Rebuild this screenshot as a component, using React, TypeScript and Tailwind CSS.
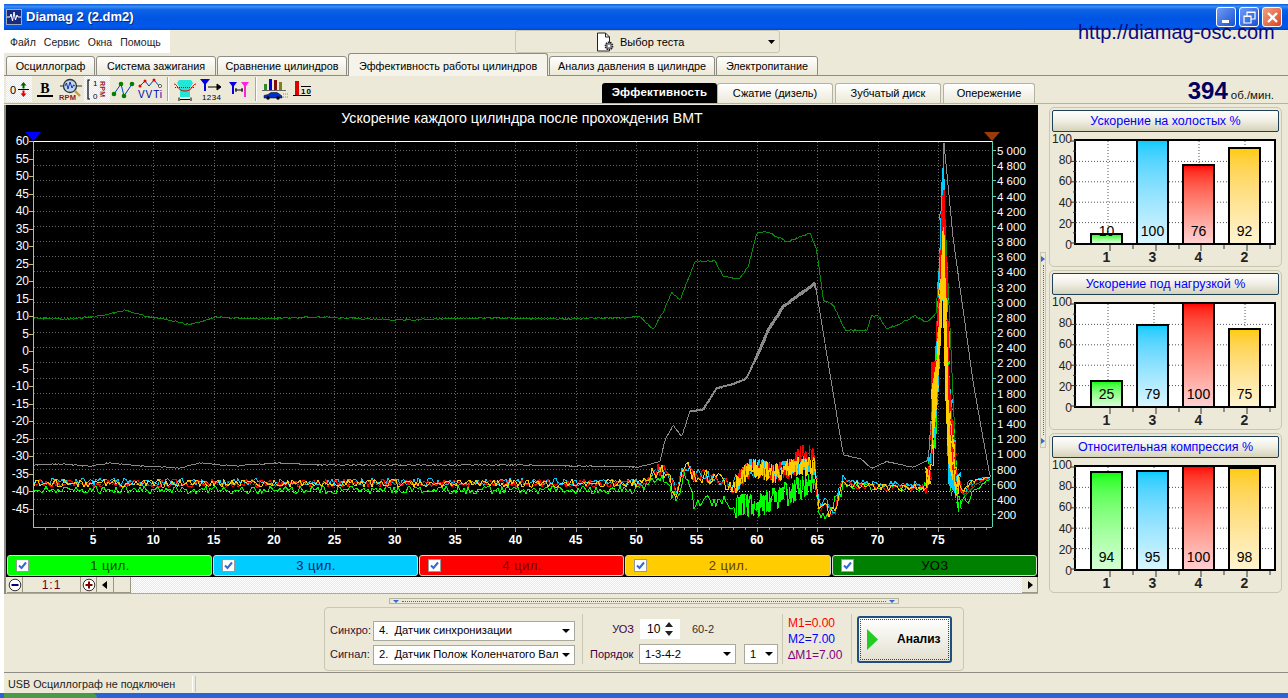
import React from "react";

const rng = (seed: number) => () => {
  seed |= 0; seed = (seed + 0x6d2b79f5) | 0;
  let t = Math.imul(seed ^ (seed >>> 15), 1 | seed);
  t = (t + Math.imul(t ^ (t >>> 7), 61 | t)) ^ t;
  return ((t ^ (t >>> 14)) >>> 0) / 4294967296;
};
type P = [number, number];
const z = (pts: P[]): P[] => pts.map(([x, y]) => [640 + x / 3, 130 + y / 3]);
const interp = (pts: P[], x: number) => {
  if (x <= pts[0][0]) return pts[0][1];
  for (let i = 1; i < pts.length; i++) {
    if (x <= pts[i][0]) {
      const [a, b] = pts[i - 1]; const [c, d] = pts[i];
      return b + ((d - b) * (x - a)) / (c - a);
    }
  }
  return pts[pts.length - 1][1];
};
const toStr = (pts: P[]) => pts.map(([x, y]) => `${x.toFixed(1)},${y.toFixed(1)}`).join(" ");
const resample = (pts: P[], seed: number, amp: number, from: number, to: number, step = 1.5) => {
  const r = rng(seed);
  const out: P[] = [];
  for (let x = from; x <= to; x += step) {
    const a = x > 925 && x < 960 ? 0.2 : amp;
    out.push([x, interp(pts, x) + (r() - 0.5) * 2 * a]);
  }
  return out;
};

const grayPts: P[] = [[33, 465], [60, 464], [90, 466], [110, 463], [130, 465], [160, 467], [180, 468], [200, 463], [235, 466], [275, 463], [320, 465], [400, 465], [520, 465], [640, 467],
  ...z([[0, 1010], [60, 995], [75, 930], [100, 885], [125, 920], [150, 845], [190, 838], [230, 775], [270, 765], [320, 745], [350, 680], [385, 600], [430, 530], [470, 500], [525, 460], [560, 670], [610, 975], [660, 985], [695, 1015], [740, 995], [820, 1012], [865, 990], [890, 620], [912, 40], [940, 330], [1000, 760], [1050, 1040]])];
const uozPts: P[] = [[33, 318], [70, 319], [100, 316], [125, 310], [150, 317], [170, 320], [190, 325], [215, 317], [260, 319], [320, 317], [400, 320], [480, 318], [560, 319], [640, 317],
  ...z([[40, 598], [70, 545], [95, 488], [120, 510], [165, 395], [225, 392], [250, 440], [300, 445], [325, 410], [350, 310], [380, 305], [440, 335], [510, 310], [530, 360], [550, 510], [580, 525], [615, 600], [680, 602], [695, 557], [715, 558], [740, 598], [780, 580], [825, 557], [860, 578], [888, 550], [905, 300], [912, 200], [925, 480], [950, 1040], [975, 1100], [1010, 1060], [1050, 1045]])];

const colorCenter = z([[0, 1060], [65, 1015], [110, 1085], [135, 1000], [160, 1040], [220, 1040], [280, 1075], [330, 1010], [400, 1030], [480, 1010], [525, 1010], [535, 1120], [580, 1150], [610, 1060], [700, 1070], [855, 1075], [870, 1000], [890, 720], [908, 110], [925, 720], [950, 1040], [970, 1085], [1010, 1050], [1050, 1045]]);
const greenCenter = z([[0, 1080], [65, 1030], [110, 1115], [135, 1030], [165, 1130], [220, 1110], [290, 1130], [340, 1130], [400, 1110], [470, 1080], [520, 1050], [535, 1130], [555, 1170], [610, 1070], [855, 1075], [880, 950], [908, 180], [930, 800], [955, 1125], [1000, 1090], [1050, 1045]]);

const series = (seed: number, center: P[], extra: (x: number) => number, greenAmp = false) => {
  const r = rng(seed);
  const pts: P[] = [];
  let x = 34;
  while (x < 992) {
    let amp = 4;
    if (x > 650 && x < 815) amp = greenAmp ? (x > 735 ? 13 : 7) : x > 735 ? 10 : 7;
    else if (x >= 815 && x < 845) amp = 7;
    else if (x >= 845 && x < 925) amp = 3.5;
    else if (x >= 925 && x < 960) amp = 10;
    else if (x >= 960) amp = x > 975 ? 1.5 : 6;
    const c = interp(center, x) + extra(x);
    const dx = x >= 925 && x < 960 ? (r() - 0.5) * 4 : 0;
    pts.push([x + dx, c + (r() - 0.5) * 2 * amp]);
    x += x > 735 && x < 815 ? 0.5 : x > 925 && x < 960 ? 0.4 : 2;
  }
  return toStr(pts);
};
const peak = (k: number) => (x: number) => (x > 925 && x < 962 ? k * Math.max(0, 1 - Math.abs(x - 943) / 16) : 0);
const Gs = {
  green: series(11, greenCenter, peak(0), true),
  cyan: series(22, colorCenter, (x) => (x > 815 && x < 925 ? -3 : -1) + peak(10)(x)),
  red: series(33, colorCenter, (x) => (x > 795 && x < 816 ? -13 : 0) + peak(30)(x)),
  yellow: series(44, colorCenter, (x) => peak(60)(x)),
};
const cyanPoly = toStr(z([[906, 115], [913, 115], [925, 720], [945, 1090], [925, 1060], [915, 720], [908, 500], [895, 800], [885, 900], [880, 980], [890, 700]]));
const greenPoly = toStr(z([[905, 135], [913, 135], [922, 740], [935, 1100], [925, 1050], [908, 500], [895, 750], [888, 960], [880, 950], [890, 700]]));
const redPoly = toStr(z([[908, 180], [914, 180], [926, 730], [952, 1040], [935, 1030], [918, 780], [908, 400], [895, 720], [880, 900], [872, 820], [872, 700], [890, 690]]));
const yellowPoly = toStr(z([[908, 290], [913, 290], [925, 800], [940, 1060], [925, 1000], [916, 800], [908, 500], [890, 830], [878, 950], [874, 780], [892, 680]]));

const rightLabels = ["5 000", "4 800", "4 600", "4 400", "4 200", "4 000", "3 800", "3 600", "3 400", "3 200", "3 000", "2 800", "2 600", "2 400", "2 200", "2 000", "1 800", "1 600", "1 400", "1 200", "1 000", "800", "600", "400", "200"];
const xU = (u: number) => 93 + (u - 5) * 12.07;
const leftY = (v: number) => 141 + (60 - v) * 3.5;

const grayA = toStr(resample(grayPts, 5, 0.5, 33, 690));
const grayB = toStr(resample(grayPts, 6, 0.3, 815, 991));
const grayC = toStr(resample(grayPts, 7, 0.5, 690, 816));
const grayD = toStr(resample(grayPts, 8, 0.6, 755, 816));
const uoz = toStr(resample(uozPts, 9, 0.8, 33, 991));

function Chart() {
  const leftVals: number[] = [];
  for (let v = 60; v >= -45; v -= 5) leftVals.push(v);
  const xVals: number[] = [];
  for (let u = 5; u <= 75; u += 5) xVals.push(u);
  const minor: number[] = [];
  for (let u = 1; u <= 79; u++) minor.push(u);
  return (
    <svg viewBox="6 105 1032 448" className="block h-[448px] w-[1032px] bg-black">
      <text x="522" y="123" fill="#fff" fontSize="14.2" textAnchor="middle" fontFamily="'Liberation Sans',sans-serif">Ускорение каждого цилиндра после прохождения ВМТ</text>
      {rightLabels.map((_, i) => {
        const y = Math.round(150 + i * 15.17) + 0.5;
        return <line key={i} x1="34" x2="991" y1={y} y2={y} stroke="#666" strokeDasharray="1 2" />;
      })}
      {xVals.map((u) => <line key={u} x1={Math.round(xU(u)) + 0.5} x2={Math.round(xU(u)) + 0.5} y1="142" y2="526" stroke="#666" strokeDasharray="1 2" />)}
      <line x1="34" x2="991" y1="491.5" y2="491.5" stroke="#8ff" strokeDasharray="1 2" />
      <g fill="none" shapeRendering="crispEdges">
        <polyline points={uoz} stroke="#0a8a0a" strokeWidth="1" />
        <polyline points={grayA} stroke="#8a8a8a" strokeWidth="1" />
        <polyline points={grayB} stroke="#8a8a8a" strokeWidth="1" />
        <polyline points={grayC} stroke="#8a8a8a" strokeWidth="2" />
        <polyline points={grayD} stroke="#8a8a8a" strokeWidth="3" />
        <polyline points={Gs.green} stroke="#00ff00" strokeWidth="1" />
        <polygon points={greenPoly} fill="#00ff00" />
        <polyline points={Gs.cyan} stroke="#00ccff" strokeWidth="1" />
        <polygon points={cyanPoly} fill="#00ccff" />
        <polyline points={Gs.red} stroke="#ff0000" strokeWidth="1" />
        <polygon points={redPoly} fill="#ff0000" />
        <polyline points={Gs.yellow} stroke="#ffcc00" strokeWidth="1" />
        <polygon points={yellowPoly} fill="#ffcc00" />
      </g>
      <line x1="33" x2="992" y1="141.5" y2="141.5" stroke="#fff" />
      <line x1="33.5" x2="33.5" y1="141" y2="527" stroke="#c8bc78" />
      <line x1="33" x2="992" y1="527.5" y2="527.5" stroke="#b0b0b0" />
      <line x1="992.5" x2="992.5" y1="141" y2="527" stroke="#5fd0b0" />
      <polygon points="25,132 41,132 33,141" fill="#0000ff" />
      <polygon points="984,132 1000,132 992,141" fill="#983c08" />
      {leftVals.map((v) => (
        <g key={v}>
          <line x1="29" x2="33" y1={Math.round(leftY(v)) + 0.5} y2={Math.round(leftY(v)) + 0.5} stroke="#c8bc78" />
          <text x="29" y={leftY(v) + 4} fill="#fff" fontSize="12" textAnchor="end" fontFamily="'Liberation Sans',sans-serif">{v}</text>
        </g>
      ))}
      {rightLabels.map((l, i) => {
        const y = Math.round(150 + i * 15.17) + 0.5;
        return (
          <g key={l}>
            <line x1="992" x2="996" y1={y} y2={y} stroke="#5fd0b0" />
            <text x="997" y={y + 4} fill="#fff" fontSize="11.5" fontFamily="'Liberation Sans',sans-serif">{l}</text>
          </g>
        );
      })}
      {minor.map((u) => <line key={u} x1={Math.round(xU(u)) + 0.5} x2={Math.round(xU(u)) + 0.5} y1="528" y2={u % 5 === 0 ? 532 : 530} stroke="#999" />)}
      {xVals.map((u) => <text key={u} x={xU(u)} y="544" fill="#fff" fontSize="12" fontWeight="700" textAnchor="middle" fontFamily="'Liberation Sans',sans-serif">{u}</text>)}
    </svg>
  );
}

const Tab = ({ label, w, active }: { label: string; w: string; active?: boolean }) => (
  <div className={`${w} ${active ? "h-[23px] -mt-px relative z-10 border-b-0 bg-[#f6f4ea] pt-0.5" : "h-[20px] mt-0.5 bg-gradient-to-b from-white to-[#ece9d8]"} flex shrink-0 items-center justify-center rounded-t-[3px] border border-[#8d8d85] text-[10.8px] text-black`}>
    {label}
  </div>
);

const SubTab = ({ label, w, active }: { label: string; w: string; active?: boolean }) => (
  <div className={`${w} ${active ? "bg-black font-bold text-white tracking-[0.2px] text-[11.5px]" : "border border-b-0 border-[#b5b2a0] bg-gradient-to-b from-white to-[#ece9d8] text-black text-[11px]"} flex h-[20px] shrink-0 items-center justify-center rounded-t-[3px]`}>
    {label}
  </div>
);

const IconBox = ({ pressed, w = "w-[26px]", children }: { pressed?: boolean; w?: string; children: React.ReactNode }) => (
  <div className={`${w} ${pressed ? "bg-[repeating-conic-gradient(#ece9d8_0_25%,#fff_0_50%)] bg-[length:2px_2px]" : ""} flex h-[26px] shrink-0 items-center justify-center`}>
    {children}
  </div>
);
const Sv = ({ children, w = 24, h = 24 }: { children: React.ReactNode; w?: number; h?: number }) => (
  <svg width={w} height={h} viewBox={`0 0 ${w} ${h}`} fontFamily="'Liberation Sans',sans-serif">{children}</svg>
);
const Sep = () => <div className="mx-[3px] h-[24px] w-[2px] shrink-0 border-l border-r border-l-[#aca899] border-r-white" />;

function Toolbar() {
  return (
    <div className="flex items-center">
      <IconBox pressed><Sv>
        <text x="3" y="17" fontSize="11" fill="#000">0</text>
        <line x1="11" x2="22" y1="12.5" y2="12.5" stroke="#000" />
        <path d="M16.5 5l3 3.5h-2v3h-2v-3h-2z" fill="#006000" />
        <path d="M16.5 20l3-3.5h-2v-3h-2v3h-2z" fill="#e00000" />
      </Sv></IconBox>
      <IconBox><Sv>
        <text x="12" y="16" fontSize="14" fontWeight="700" textAnchor="middle" fontFamily="'Liberation Serif',serif" fill="#000">B</text>
        <rect x="4" y="18" width="16" height="2" fill="#000" />
      </Sv></IconBox>
      <IconBox><Sv>
        <circle cx="11" cy="9" r="6.5" fill="#b9d8f0" stroke="#333" strokeWidth="1.3" />
        <path d="M6 9l1.5-3 1.5 6 2-7 2 6 1.5-3 1.5 1" fill="none" stroke="#0000a0" strokeWidth="0.8" />
        <line x1="1" x2="5" y1="9" y2="9" stroke="#333" /><line x1="17" x2="23" y1="9" y2="9" stroke="#333" />
        <line x1="16" x2="21" y1="14" y2="19" stroke="#c9a030" strokeWidth="2.4" />
        <text x="0" y="23" fontSize="7.5" fontWeight="700" fill="#8c1c1c" textLength="17">RPM</text>
      </Sv></IconBox>
      <IconBox pressed><Sv>
        <path d="M5 3H3v19h2" fill="none" stroke="#000" strokeWidth="1.2" />
        <text x="8" y="9" fontSize="8" fill="#000">1</text><text x="8" y="22" fontSize="8" fill="#000">0</text>
        <text x="0" y="0" fontSize="7" fontWeight="700" fill="#8c1c1c" transform="translate(15 4) rotate(90)" textLength="16">RPM</text>
      </Sv></IconBox>
      <IconBox><Sv>
        <polyline points="3,17 10,7 13,19 21,7" fill="none" stroke="#0040c0" />
        {[[3, 17], [10, 7], [13, 19], [21, 7]].map(([x, y]) => <circle key={x} cx={x} cy={y} r="2.3" fill="#008000" />)}
      </Sv></IconBox>
      <IconBox w="w-[28px]"><Sv w={26}>
        <polyline points="2,10 8,4 12,9 17,3 23,10" fill="none" stroke="#0040c0" />
        {[[3, 9], [8, 4], [17, 3]].map(([x, y]) => <circle key={x} cx={x} cy={y} r="1.5" fill="#e00000" />)}
        <circle cx="23" cy="9" r="1.6" fill="#fff" stroke="#000" strokeWidth="0.6" />
        <text x="1" y="21" fontSize="10" fill="#0000b0" textLength="24">VVTi</text>
      </Sv></IconBox>
      <Sep />
      <IconBox><Sv>
        <path d="M6 3h12l2 3-3 5v9H7v-9L4 6z" fill="#22e6d6" />
        <path d="M1 7c4 0 3 7 11 7s7-7 11-7" fill="none" stroke="#e00000" />
        <line x1="2" x2="22" y1="10.5" y2="10.5" stroke="#333" strokeDasharray="1 1" />
        <path d="M7 22.5h10M6 20.5v4M18 20.5v4" stroke="#000" fill="none" />
      </Sv></IconBox>
      <IconBox w="w-[28px]"><Sv w={26}>
        <path d="M1 2h10l-4 5v7H5V7z" fill="#0000e0" />
        <path d="M9 10h12m-3-3l4 3-4 3z" stroke="#000" fill="#000" />
        <text x="3" y="23" fontSize="8" fill="#000" textLength="19">1234</text>
      </Sv></IconBox>
      <IconBox><Sv>
        <path d="M2 5h8L7 9v8H5V9z" fill="#0000e0" />
        <path d="M14 5h8l-3 4v11h-2V9z" fill="#ff20e0" />
        <path d="M8 13h8M9 11v4M15 11v4" stroke="#000" fill="none" />
      </Sv></IconBox>
      <Sep />
      <IconBox w="w-[29px]"><Sv w={28}>
        <rect x="3" y="7" width="3" height="6" fill="#2e8a2e" />
        <rect x="8" y="2" width="3" height="11" fill="#0000e0" />
        <rect x="13" y="3" width="3" height="10" fill="#801010" />
        <rect x="18" y="5" width="3" height="8" fill="#808010" />
        <line x1="1" x2="25" y1="13.5" y2="13.5" stroke="#666" />
        <path d="M3 21v-2.500l4-1 3-2h6l3 2 2 1.500v2z" fill="#0030d0" stroke="#000" strokeWidth="0.5" />
        <circle cx="7" cy="21" r="1.700" fill="#000" /><circle cx="17" cy="21" r="1.700" fill="#000" />
        <line x1="22" x2="27" y1="17" y2="17" stroke="#888" strokeDasharray="1 1" /><line x1="22" x2="27" y1="20" y2="20" stroke="#888" strokeDasharray="1 1" />
      </Sv></IconBox>
      <IconBox><Sv>
        <rect x="5" y="4" width="4" height="14" fill="#e00000" />
        <line x1="3" x2="21" y1="18.5" y2="18.5" stroke="#000" />
        <line x1="11" x2="21" y1="9.5" y2="9.5" stroke="#000" />
        <text x="11" y="17" fontSize="8" fontWeight="700" fill="#000" textLength="10">10</text>
      </Sv></IconBox>
    </div>
  );
}

const Check = () => (
  <span className="flex h-[13px] w-[13px] shrink-0 items-center justify-center border border-[#9a9a9a] bg-white">
    <svg width="9" height="9" viewBox="0 0 9 9"><path d="M1 4.5l2.5 2.5L8 1.5" fill="none" stroke="#2f6bd0" strokeWidth="2" /></svg>
  </span>
);
const legend = [
  { t: "1 цил.", c: "bg-[#00ff00] text-[#004000]", w: "w-[205px]" },
  { t: "3 цил.", c: "bg-[#00ccff] text-[#002060]", w: "w-[205px]" },
  { t: "4 цил.", c: "bg-[#ff0000] text-[#700000]", w: "w-[205px]" },
  { t: "2 цил.", c: "bg-[#ffcc00] text-[#604000]", w: "w-[206px]" },
  { t: "УОЗ", c: "bg-[#008000] text-black", w: "w-[205px]" },
];

function Legend() {
  return (
    <div className="flex h-[24px] items-start gap-px bg-black pl-px pt-0.5">
      {legend.map((l) => (
        <div key={l.t} className={`${l.w} ${l.c} flex h-[21px] shrink-0 items-center rounded-[3px] border border-[#d8d8d0] pl-2`}>
          <Check />
          <span className="flex-1 pr-[20px] text-center text-[13px] tracking-[0.5px]">{l.t}</span>
        </div>
      ))}
    </div>
  );
}

const ScrollBtn = ({ w, children }: { w: string; children?: React.ReactNode }) => (
  <div className={`${w} flex h-[16px] shrink-0 items-center justify-center border-b border-r border-b-[#9a9884] border-r-[#9a9884] bg-[#ece9d8]`}>{children}</div>
);

function ScrollRow() {
  return (
    <div className="flex h-[17px] items-start border-b border-[#aca899] pl-px">
      <ScrollBtn w="w-[16px]"><svg width="14" height="14" viewBox="0 0 14 14"><circle cx="7" cy="7" r="5.8" fill="#fff" stroke="#333" /><rect x="3.5" y="6" width="7" height="2" fill="#000080" /></svg></ScrollBtn>
      <div className="flex h-[16px] w-[58px] shrink-0 items-center justify-center border-b border-r border-[#9a9884] bg-[#ece9d8] text-[12px] tracking-[1px] text-[#600030]">1:1</div>
      <ScrollBtn w="w-[16px]"><svg width="14" height="14" viewBox="0 0 14 14"><circle cx="7" cy="7" r="5.8" fill="#fff" stroke="#333" /><path d="M3.5 7h7M7 3.5v7" stroke="#800000" strokeWidth="2" /></svg></ScrollBtn>
      <ScrollBtn w="w-[17px]"><svg width="6" height="8" viewBox="0 0 6 8"><path d="M5 0v8L0 4z" fill="#000" /></svg></ScrollBtn>
      <ScrollBtn w="w-[17px]" />
      <div className="h-[16px] flex-1 bg-[repeating-conic-gradient(#ece9d8_0_25%,#fff_0_50%)] bg-[length:2px_2px]" />
      <ScrollBtn w="w-[16px]"><svg width="6" height="8" viewBox="0 0 6 8"><path d="M1 0v8l5-4z" fill="#000" /></svg></ScrollBtn>
    </div>
  );
}

const barStyle: Record<string, string> = {
  "1": "bg-gradient-to-b from-[#00ff00] to-[#d4ffd4]",
  "3": "bg-gradient-to-b from-[#00ccff] to-[#d8f6ff]",
  "4": "bg-gradient-to-b from-[#ff0000] to-[#ffd0d0]",
  "2": "bg-gradient-to-b from-[#ffcc00] to-[#fff4d0]",
};

function BarPanel({ title, vals }: { title: string; vals: [string, number][] }) {
  return (
    <div className="flex h-[160px] w-[233px] flex-col rounded-[5px] border border-[#c9c6b2] px-[2px] pt-[2px]">
      <div className="flex h-[22px] shrink-0 items-center justify-center rounded-[2px] border border-[#1f3f55] bg-gradient-to-b from-white via-[#f0eee2] to-[#d5d2bb] text-[12.5px] text-[#0000ff]">
        {title}
      </div>
      <div className="mt-[7px] flex h-[106px] shrink-0">
        <div className="flex h-[118px] w-[20px] shrink-0 -translate-y-[6px] flex-col items-end justify-between text-[12px] leading-[12px] text-[#222]">
          {["100", "80", "60", "40", "20", "0"].map((t) => <span key={t}>{t}</span>)}
        </div>
        <div className="relative ml-[2px] h-[106px] w-[202px] shrink-0 border-2 border-black bg-white">
          <svg className="absolute -left-[7px] -top-[2px] h-[112px] w-[210px] overflow-visible" viewBox="0 0 210 112">
            {[0, 1, 2, 3, 4, 5, 6, 7, 8, 9, 10].map((i) => <line key={i} x1={i % 2 === 0 ? 2 : 4} x2="7" y1={2 + i * 10.2} y2={2 + i * 10.2} stroke="#333" />)}
            {[32, 55, 78, 101, 123, 146, 169, 192].map((p, i) => <line key={p} x1={p + 9} x2={p + 9} y1="106" y2={i % 2 === 0 ? 112 : 110} stroke="#333" />)}
          </svg>
          <svg className="absolute inset-0 h-full w-full" viewBox="0 0 198 102" preserveAspectRatio="none">
            {[20, 40, 60, 80].map((p) => <line key={p} x1="0" x2="198" y1={102 - p * 1.02} y2={102 - p * 1.02} stroke="#555" strokeDasharray="1 2" />)}
            {[32, 78, 123, 169].map((p) => <line key={p} x1={p} x2={p} y1="0" y2="102" stroke="#555" strokeDasharray="1 2" />)}
          </svg>
          <div className="absolute inset-0 flex items-end gap-[13px] pl-[14px]">
            {vals.map(([k, v]) => (
              <div key={k} className={`${barStyle[k]} relative w-[33px] shrink-0 border-2 border-b-0 border-black`} style={{ height: `${v * 1.04}px` }}>
                <span className="absolute bottom-[4px] left-1/2 -translate-x-1/2 text-[14px] leading-[16px] text-black">{v}</span>
              </div>
            ))}
          </div>
        </div>
      </div>
      <div className="flex h-[16px] gap-[13px] pl-[38px] pt-[5px]">
        {vals.map(([k]) => <span key={k} className="w-[33px] shrink-0 text-center text-[14px] font-bold leading-[14px] text-[#222]">{k}</span>)}
      </div>
    </div>
  );
}

const Combo = ({ w, text, h = "h-[20px]" }: { w: string; text: string; h?: string }) => (
  <div className={`${w} ${h} flex shrink-0 items-center border border-[#a9a89c] bg-white pl-[5px] pr-[4px] text-[11.2px] text-black`}>
    <span className="flex-1 overflow-hidden whitespace-pre">{text}</span>
    <svg className="ml-1 shrink-0" width="8" height="4" viewBox="0 0 8 4"><path d="M0 0h8L4 4z" fill="#000" /></svg>
  </div>
);

function BottomPanel() {
  return (
    <div className="ml-[320px] mt-[3px] flex h-[64px] w-[640px] items-center rounded-[4px] border border-[#c9c6b2] pl-[5px]">
      <div className="flex w-[252px] shrink-0 flex-col gap-[4px] pt-[7px]">
        <div className="flex items-center">
          <span className="w-[43px] shrink-0 text-[11px] text-[#301030]">Синхро:</span>
          <Combo w="w-[202px]" text="4.  Датчик синхронизации" />
        </div>
        <div className="flex items-center">
          <span className="w-[43px] shrink-0 text-[11px] text-[#301030]">Сигнал:</span>
          <Combo w="w-[202px]" text="2.  Датчик Полож Коленчатого Вала" />
        </div>
      </div>
      <div className="h-[50px] w-px shrink-0 bg-[#c9c6b2]" />
      <div className="ml-[7px] flex w-[192px] shrink-0 flex-col gap-[5px] pt-[5px]">
        <div className="flex items-center">
          <span className="w-[50px] shrink-0 pr-[6px] text-right text-[11px] text-[#400040]">УОЗ</span>
          <div className="flex h-[20px] w-[40px] shrink-0 items-center justify-between bg-white px-[7px] text-[12px]">
            <span>10</span>
            <svg width="8" height="16" viewBox="0 0 8 16"><path d="M0 6l4-5 4 5zM0 10h8l-4 5z" fill="#222" /></svg>
          </div>
          <span className="ml-[12px] text-[11px] text-[#303030]">60-2</span>
        </div>
        <div className="flex items-center">
          <span className="w-[49px] shrink-0 text-[11px] text-[#400040]">Порядок</span>
          <Combo w="w-[97px]" text="1-3-4-2" />
          <Combo w="w-[34px]" text="1" h="h-[20px] ml-[8px]" />
        </div>
      </div>
      <div className="h-[50px] w-px shrink-0 bg-[#c9c6b2]" />
      <div className="ml-[5px] flex w-[63px] shrink-0 flex-col gap-[2px] text-[12px] leading-[14px]">
        <span className="text-[#ff0000]">M1=0.00</span>
        <span className="text-[#0000ff]">M2=7.00</span>
        <span className="text-[#800080]">∆M1=7.00</span>
      </div>
      <div className="h-[50px] w-px shrink-0 bg-[#c9c6b2]" />
      <div className="ml-[5px] flex h-[47px] w-[95px] shrink-0 items-center rounded-[3px] border-2 border-[#1f4f80] bg-gradient-to-b from-white to-[#e3e0d0] pl-[8px] outline-dotted outline-1 -outline-offset-4 outline-[#444]">
        <svg width="11" height="21" viewBox="0 0 11 21"><path d="M0 0l11 10.5L0 21z" fill="#22cc22" /></svg>
        <span className="ml-[19px] text-[12px] font-bold text-black">Анализ</span>
      </div>
    </div>
  );
}

export default function App() {
  return (
    <div className="relative h-[698px] w-[1288px] overflow-hidden bg-white pl-[4px] pt-[4px] [font-family:'Liberation_Sans',sans-serif]">
      <div className="flex h-[694px] flex-col bg-[#ece9d8]">
        {/* title bar */}
        <div className="flex h-[26px] shrink-0 items-center bg-[linear-gradient(180deg,#0a5cdc_0%,#3b8df5_10%,#0d63e6_22%,#0054e3_55%,#0058ea_88%,#0046d0_100%)] pl-[2px] pr-[6px]">
          <div className="flex h-[16px] w-[16px] items-center justify-center border border-[#9ab] bg-[#1a2a80]">
            <svg width="14" height="14" viewBox="0 0 14 14"><path d="M0 7h3l1-3 1.5 7L7 2l1.5 8L10 5l1 2h3" fill="none" stroke="#fff" /></svg>
          </div>
          <span className="ml-[4px] text-[13px] font-bold text-white [text-shadow:1px_1px_0_#0a2a80]">Diamag 2 (2.dm2)</span>
          <div className="ml-auto flex gap-[3px]">
            <div className="flex h-[20px] w-[20px] items-end rounded-[3px] border border-white bg-gradient-to-br from-[#6f9cf5] to-[#1a4fd0] pb-[3px] pl-[5px]"><div className="h-[3px] w-[7px] bg-white" /></div>
            <div className="flex h-[20px] w-[20px] items-center justify-center rounded-[3px] border border-white bg-gradient-to-br from-[#6f9cf5] to-[#1a4fd0]">
              <svg width="13" height="13" viewBox="0 0 13 13"><path d="M1 5h7v7H1zM1 5.5h7M4 5V1h8v7H8M4 1.5h8" fill="none" stroke="#fff" strokeWidth="1.2" /></svg>
            </div>
            <div className="flex h-[20px] w-[20px] items-center justify-center rounded-[3px] border border-white bg-gradient-to-br from-[#f0a080] to-[#d8401a]">
              <svg width="13" height="13" viewBox="0 0 13 13"><path d="M2 2l9 9M11 2l-9 9" stroke="#fff" strokeWidth="2.4" /></svg>
            </div>
          </div>
        </div>
        {/* URL overlay */}
        <div className="absolute left-[1078px] top-[20px] text-[20px] leading-[24px] text-[#0a0a80]">http://diamag-osc.com</div>
        {/* menu */}
        <div className="flex h-[24px] shrink-0">
          <div className="flex h-[23px] w-[166px] items-center gap-[8px] bg-white pl-[6px] pt-[2px] text-[10.5px] text-[#222]">
            <span>Файл</span><span>Сервис</span><span>Окна</span><span>Помощь</span>
          </div>
          <div className="ml-[345px] flex h-[23px] w-[265px] items-center rounded-[3px] border border-[#c9c6b2] pl-[80px] pr-[4px]">
            <svg width="19" height="20" viewBox="0 0 19 20"><path d="M1.5 1h8l4 4v14h-12z" fill="#fff" stroke="#222" /><path d="M9.5 1v4h4" fill="none" stroke="#222" /><circle cx="13" cy="14" r="3.6" fill="#888" stroke="#222" strokeDasharray="1.4 0.8" strokeWidth="1.6" /><circle cx="13" cy="14" r="1.2" fill="#fff" /></svg>
            <span className="ml-[5px] pt-[1px] text-[11px] text-black">Выбор теста</span>
            <svg className="ml-auto" width="7" height="4" viewBox="0 0 7 4"><path d="M0 0h7L3.5 4z" fill="#000" /></svg>
          </div>
        </div>
        {/* tabs */}
        <div className="flex h-[22px] shrink-0 items-start gap-px border-b border-[#8d8d85] pl-[2px]">
          <Tab label="Осциллограф" w="w-[89px]" />
          <Tab label="Система зажигания" w="w-[120px]" />
          <Tab label="Сравнение цилиндров" w="w-[130px]" />
          <Tab label="Эффективность работы цилиндров" w="w-[200px]" active />
          <Tab label="Анализ давления в цилиндре" w="w-[166px]" />
          <Tab label="Электропитание" w="w-[102px]" />
        </div>
        {/* toolbar */}
        <div className="flex h-[28px] shrink-0 items-end border-b border-[#b5b2a0] pl-[2px]">
          <div className="self-start"><Toolbar /></div>
          <div className="ml-[287px] flex">
            <SubTab label="Эффективность" w="w-[115px]" active />
            <SubTab label="Сжатие (дизель)" w="w-[116px] mr-[2px]" />
            <SubTab label="Зубчатый диск" w="w-[106px] mr-[2px]" />
            <SubTab label="Опережение" w="w-[92px]" />
          </div>
          <div className="ml-auto flex items-baseline self-center pr-[14px] pt-[3px] text-[#000060]">
            <span className="text-[24px] font-bold leading-[26px]">394</span>
            <span className="ml-[3px] text-[11.5px] text-[#111]">об./мин.</span>
          </div>
        </div>
        {/* main */}
        <div className="flex h-[490px] shrink-0 pt-px">
          <div className="w-[1034px] shrink-0 border-l-2 border-[#8d8d85]">
            <Chart />
            <Legend />
            <ScrollRow />
          </div>
          <div className="ml-[2px] flex h-[196px] w-[6px] shrink-0 flex-col items-center justify-between self-center border border-[#c9c6b2] py-[3px]">
            <svg width="4" height="6" viewBox="0 0 4 6"><path d="M0 0l4 3-4 3z" fill="#2f6bd0" /></svg>
            <div className="my-[3px] w-px flex-1 border-l border-dotted border-[#2f6bd0]" />
            <svg width="4" height="6" viewBox="0 0 4 6"><path d="M0 0l4 3-4 3z" fill="#2f6bd0" /></svg>
          </div>
          <div className="ml-[3px] flex flex-col gap-[3px] pt-[2px]">
            <BarPanel title="Ускорение на холостых %" vals={[["1", 10], ["3", 100], ["4", 76], ["2", 92]]} />
            <BarPanel title="Ускорение под нагрузкой %" vals={[["1", 25], ["3", 79], ["4", 100], ["2", 75]]} />
            <BarPanel title="Относительная компрессия %" vals={[["1", 94], ["3", 95], ["4", 100], ["2", 98]]} />
          </div>
        </div>
        {/* bottom */}
        <div className="flex h-[79px] shrink-0 flex-col border-b border-[#8d8d85]">
          <div className="ml-[385px] mt-[4px] flex h-[6px] w-[510px] items-center justify-between border border-[#b5b2a0] px-[3px]">
            <svg width="6" height="3" viewBox="0 0 6 3"><path d="M0 0h6L3 3z" fill="#2f6bd0" /></svg>
            <div className="mx-[3px] h-px flex-1 border-t border-dotted border-[#2f6bd0]" />
            <svg width="6" height="3" viewBox="0 0 6 3"><path d="M0 0h6L3 3z" fill="#2f6bd0" /></svg>
          </div>
          <BottomPanel />
        </div>
        {/* status */}
        <div className="mt-[3px] flex h-[16px] shrink-0 text-[10.8px] text-[#222]">
          <div className="flex w-[189px] items-center border-r border-white pl-[4px] pt-[1px]">USB Осциллограф не подключен</div>
          <div className="ml-[2px] flex-1 border-l border-[#c9c6b2]" />
        </div>
      </div>
      <div className="absolute bottom-0 left-0 flex h-[5px] w-full bg-[#2a62d8]">
        <div className="ml-[4px] h-full w-[93px] rounded-tr-[6px] bg-[#4a9a4a]" />
      </div>
    </div>
  );
}
